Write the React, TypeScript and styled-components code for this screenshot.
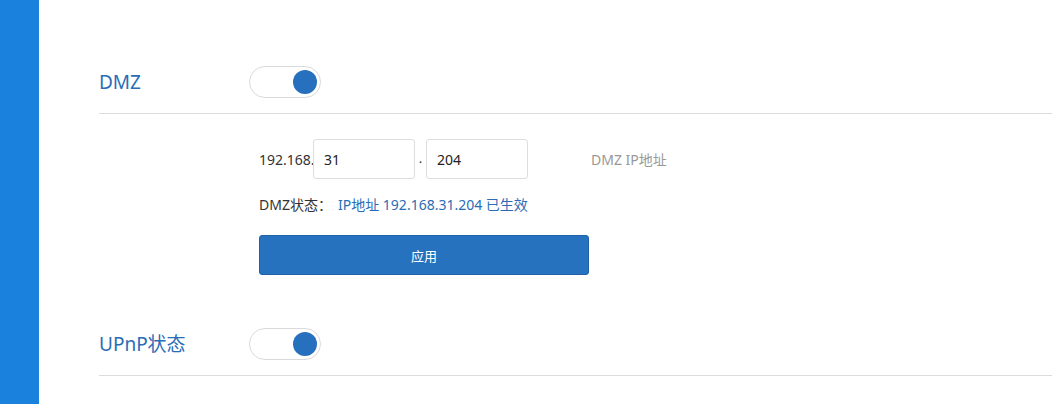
import { useState } from "react";
import styled, { createGlobalStyle } from "styled-components";

const GlobalStyle = createGlobalStyle`
  html, body {
    margin: 0;
    padding: 0;
    background: #fff;
  }
  body {
    font-family: "Noto Sans", "Noto Sans CJK SC", sans-serif;
    color: #333;
  }
`;

const Page = styled.div`
  display: flex;
  width: 1052px;
  height: 404px;
  overflow: hidden;
`;

const SideBar = styled.div`
  width: 39px;
  flex-shrink: 0;
  background: #1a82dc;
`;

const Main = styled.div`
  flex: 1;
  padding: 66px 0 0 60px;
`;

const Section = styled.div`
  display: flex;
  flex-direction: column;
`;

const SectionHeader = styled.div`
  display: flex;
  align-items: center;
  padding-bottom: 15px;
  border-bottom: 1px solid #dcdcdc;
`;

const SectionTitle = styled.div`
  width: 150px;
  font-size: 19px;
  line-height: 32px;
  color: #2a6db6;
`;

const SwitchTrack = styled.button<{ $on: boolean }>`
  position: relative;
  width: 72px;
  height: 32px;
  padding: 0;
  border: 1px solid #dadada;
  border-radius: 16px;
  background: #fff;
  cursor: pointer;
  outline: none;
`;

const SwitchKnob = styled.span<{ $on: boolean }>`
  position: absolute;
  top: 3px;
  left: ${(p) => (p.$on ? "43px" : "3px")};
  width: 24px;
  height: 24px;
  border-radius: 50%;
  background: #2770bd;
  transition: left 0.2s;
`;

const Form = styled.div`
  display: flex;
  flex-direction: column;
  padding: 25px 0 53px 160px;
`;

const IpRow = styled.div`
  display: flex;
  align-items: center;
  font-size: 14px;
`;

const IpPrefix = styled.span`
  width: 54px;
  white-space: nowrap;
  color: #333;
`;

const IpInput = styled.input`
  box-sizing: border-box;
  width: 102px;
  height: 40px;
  padding: 0 10px;
  border: 1px solid #dddddd;
  border-radius: 3px;
  font-family: inherit;
  font-size: 14px;
  color: #222;
  outline: none;
`;

const IpDot = styled.span`
  width: 11px;
  text-align: center;
  align-self: flex-end;
  padding-bottom: 12px;
  font-size: 13px;
`;

const FieldHint = styled.span`
  margin-left: 63px;
  color: #999;
  font-size: 14px;
`;

const StatusRow = styled.div`
  display: flex;
  align-items: center;
  margin-top: 16px;
  font-size: 14px;
  line-height: 20px;
`;

const StatusLabel = styled.span`
  width: 79px;
  color: #333;
`;

const StatusValue = styled.span`
  color: #2a6db6;
`;

const ApplyButton = styled.button`
  margin-top: 20px;
  width: 330px;
  height: 40px;
  border: 1px solid #1f62a8;
  border-radius: 3px;
  background: #2672be;
  color: #fff;
  font-family: inherit;
  font-size: 13px;
  cursor: pointer;
`;

const Switch = ({ on, onToggle }: { on: boolean; onToggle: () => void }) => (
  <SwitchTrack $on={on} onClick={onToggle}>
    <SwitchKnob $on={on} />
  </SwitchTrack>
);

export default function App() {
  const [dmz, setDmz] = useState(true);
  const [upnp, setUpnp] = useState(true);
  const [third, setThird] = useState("31");
  const [fourth, setFourth] = useState("204");

  return (
    <>
      <GlobalStyle />
      <Page>
        <SideBar />
        <Main>
          <Section>
            <SectionHeader>
              <SectionTitle>DMZ</SectionTitle>
              <Switch on={dmz} onToggle={() => setDmz(!dmz)} />
            </SectionHeader>
            <Form>
              <IpRow>
                <IpPrefix>192.168.</IpPrefix>
                <IpInput value={third} onChange={(e) => setThird(e.target.value)} />
                <IpDot>.</IpDot>
                <IpInput value={fourth} onChange={(e) => setFourth(e.target.value)} />
                <FieldHint>DMZ IP地址</FieldHint>
              </IpRow>
              <StatusRow>
                <StatusLabel>DMZ状态：</StatusLabel>
                <StatusValue>IP地址 192.168.31.204 已生效</StatusValue>
              </StatusRow>
              <ApplyButton>应用</ApplyButton>
            </Form>
          </Section>
          <Section>
            <SectionHeader>
              <SectionTitle>UPnP状态</SectionTitle>
              <Switch on={upnp} onToggle={() => setUpnp(!upnp)} />
            </SectionHeader>
          </Section>
        </Main>
      </Page>
    </>
  );
}
